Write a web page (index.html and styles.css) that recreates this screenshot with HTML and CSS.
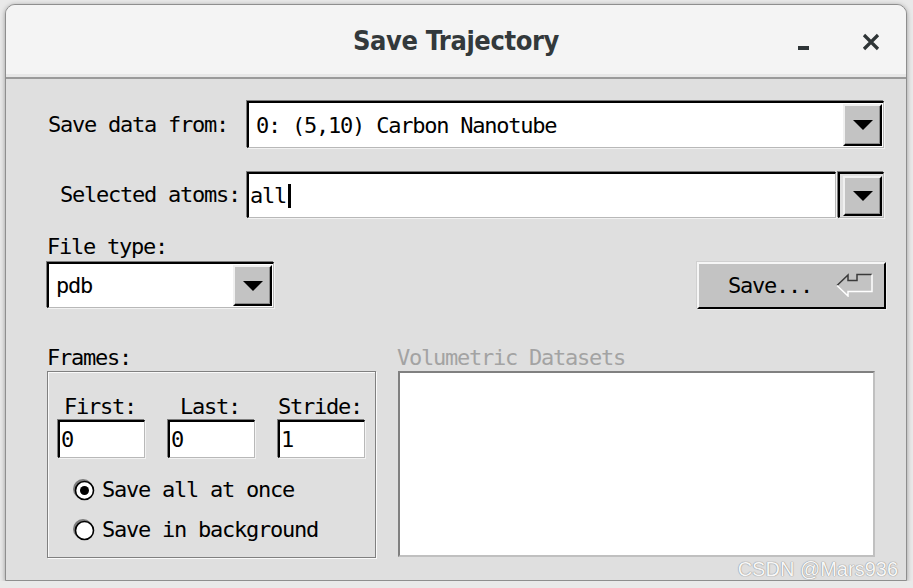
FILE: index.html
```html
<!DOCTYPE html>
<html>
<head>
<meta charset="utf-8">
<title>Save Trajectory</title>
<link rel="stylesheet" href="styles.css">
</head>
<body>
<div class="window">
  <div class="titlebar">
    <div class="title-spacer"></div>
    <div class="title">Save Trajectory</div>
    <div class="wm-buttons">
      <svg class="wm-icon" width="24" height="24" viewBox="0 0 24 24"><rect x="7" y="18" width="11" height="4" fill="#2e3436"/></svg>
      <svg class="wm-icon" width="24" height="24" viewBox="0 0 24 24"><path d="M5 7 L19 21 M19 7 L5 21" stroke="#2e3436" stroke-width="3.2" fill="none"/></svg>
    </div>
  </div>
  <div class="content">
    <div class="row row-source">
      <span class="label label-source">Save data from:</span>
      <div class="combo combo-source">
        <span class="combo-text">0: (5,10) Carbon Nanotube</span>
        <span class="arrow-btn"><svg width="20" height="10" viewBox="0 0 20 10"><path d="M0 0 L20 0 L10 10 Z" fill="#000"/></svg></span>
      </div>
    </div>
    <div class="row row-atoms">
      <span class="label label-atoms">Selected atoms:</span>
      <div class="entry entry-atoms"><span class="entry-text">all</span><span class="caret"></span></div>
      <div class="btn-frame">
        <span class="arrow-btn"><svg width="20" height="10" viewBox="0 0 20 10"><path d="M0 0 L20 0 L10 10 Z" fill="#000"/></svg></span>
      </div>
    </div>
    <div class="row row-type">
      <div class="type-group">
        <span class="label">File type:</span>
        <div class="combo combo-type">
          <span class="combo-text">pdb</span>
          <span class="arrow-btn"><svg width="20" height="10" viewBox="0 0 20 10"><path d="M0 0 L20 0 L10 10 Z" fill="#000"/></svg></span>
        </div>
      </div>
      <div class="save-btn">
        <span class="save-text">Save...</span>
        <svg class="enter-icon" width="38" height="24" viewBox="0 0 38 24">
          <polyline points="1,12.5 12,2 12,7.5 21,7.5 21,1.5 36,1.5" fill="none" stroke="#3a3a3a" stroke-width="1.5"/>
          <polyline points="36,1.5 36,18.5 12,18.5 12,23 1,12.5" fill="none" stroke="#ffffff" stroke-width="1.5"/>
        </svg>
      </div>
    </div>
    <div class="row row-bottom">
      <div class="frames-group">
        <span class="label">Frames:</span>
        <div class="groove">
          <div class="frame-fields">
            <div class="field">
              <span class="label">First:</span>
              <div class="entry entry-small"><span class="entry-text">0</span></div>
            </div>
            <div class="field">
              <span class="label">Last:</span>
              <div class="entry entry-small"><span class="entry-text">0</span></div>
            </div>
            <div class="field">
              <span class="label">Stride:</span>
              <div class="entry entry-small"><span class="entry-text">1</span></div>
            </div>
          </div>
          <div class="radios">
            <div class="radio">
              <svg width="24" height="24" viewBox="0 0 24 24">
                <circle cx="11" cy="11" r="10" fill="#7a7a7a"/>
                <circle cx="12.5" cy="12.5" r="9" fill="#fff" stroke="#000" stroke-width="1.6"/>
                <circle cx="12.5" cy="12.5" r="4.5" fill="#000"/>
              </svg>
              <span class="label">Save all at once</span>
            </div>
            <div class="radio">
              <svg width="24" height="24" viewBox="0 0 24 24">
                <circle cx="11" cy="11" r="10" fill="#7a7a7a"/>
                <circle cx="12.5" cy="12.5" r="9" fill="#fff" stroke="#000" stroke-width="1.6"/>
              </svg>
              <span class="label">Save in background</span>
            </div>
          </div>
        </div>
      </div>
      <div class="vol-group">
        <span class="label label-disabled">Volumetric Datasets</span>
        <div class="listbox"></div>
      </div>
    </div>
  </div>
  <div class="watermark">CSDN @Mars936</div>
</div>
</body>
</html>
```
FILE: styles.css
```css
* { box-sizing: border-box; }
html, body {
  margin: 0;
  background: #e9e9e9;
}
body {
  padding: 4px 0 0 5px;
}
.window {
  position: relative;
  width: 902px;
  height: 577px;
  border: 1px solid #8e8e8e;
  border-radius: 10px 10px 0 0;
  background: #dfdfdf;
  box-shadow: 0 1px 5px rgba(0,0,0,0.35);
  overflow: hidden;
}
.titlebar {
  height: 74px;
  background: #f4f4f4;
  border-bottom: 2px solid #9a9a9a;
  box-shadow: inset 0 -3px 0 #e7e7e7;
  display: grid;
  grid-template-columns: 1fr auto 1fr;
  align-items: center;
}
.title {
  font-family: "DejaVu Sans Condensed", "DejaVu Sans", sans-serif;
  font-size: 27px;
  font-weight: bold;
  color: #33393b;
  letter-spacing: -0.4px;
  padding-bottom: 2px;
}
.wm-buttons {
  display: flex;
  justify-content: flex-end;
  gap: 44px;
  padding-right: 23px;
  padding-bottom: 2px;
}
.wm-icon { display: block; }

.content {
  padding: 22px 22px 0 41px;
}
.label {
  font-family: "DejaVu Sans Mono", "Liberation Mono", monospace;
  font-size: 22px;
  line-height: 22px;
  letter-spacing: -1.24px;
  color: #000;
  white-space: pre;
}
.label-disabled { color: #a3a3a3; }

.row { display: flex; }
.row-source { align-items: center; height: 47px; }
.label-source { margin-left: 1px; }
.combo {
  display: flex;
  align-items: stretch;
  background: #fff;
  border-style: solid;
  border-width: 2px 1px 1px 2px;
  border-color: #000 #b8b8b8 #b8b8b8 #000;
  box-shadow: -1px -1px 0 #7c7c7c, 1px 1px 0 #f2f2f2;
  padding: 1px 1px 1px 0;
}
.combo-source {
  flex: 1;
  height: 47px;
  margin-left: 19px;
}
.combo-text {
  flex: 1;
  padding-left: 7px;
  display: flex;
  align-items: center;
  font-family: "DejaVu Sans Mono", "Liberation Mono", monospace;
  font-size: 22px;
  letter-spacing: -1.24px;
  white-space: pre;
}
.arrow-btn {
  width: 39px;
  background: #c3c3c3;
  border-style: solid;
  border-width: 2px;
  border-color: #f0f0f0 #000 #000 #f0f0f0;
  box-shadow: inset -1px -1px 0 #8c8c8c;
  display: flex;
  align-items: center;
  justify-content: center;
}
.arrow-btn svg { display: block; margin-left: 1px; }

.row-atoms { margin-top: 24px; height: 46px; align-items: center; }
.label-atoms { margin-left: 13px; }
.entry {
  background: #fff;
  border-style: solid;
  border-width: 2px 1px 1px 2px;
  border-color: #000 #b8b8b8 #b8b8b8 #000;
  box-shadow: -1px -1px 0 #7c7c7c, 1px 1px 0 #f2f2f2;
  display: flex;
  align-items: center;
}
.entry-text {
  font-family: "DejaVu Sans Mono", "Liberation Mono", monospace;
  font-size: 22px;
  letter-spacing: -1.24px;
  white-space: pre;
}
.entry-atoms {
  flex: 1;
  height: 46px;
  margin-left: 7px;
  padding-left: 1px;
}
.caret {
  width: 3px;
  height: 24px;
  background: #000;
  margin-left: 2px;
}
.btn-frame {
  width: 46px;
  height: 46px;
  margin-left: 2px;
  display: flex;
  border-style: solid;
  border-width: 2px 1px 1px 2px;
  border-color: #000 #b8b8b8 #b8b8b8 #000;
  box-shadow: -1px -1px 0 #7c7c7c, 1px 1px 0 #f2f2f2;
  padding: 2px 1px 1px 3px;
}
.btn-frame .arrow-btn { flex: 1; }

.row-type {
  margin-top: 18px;
  justify-content: space-between;
  align-items: flex-end;
}
.type-group {
  display: flex;
  flex-direction: column;
  gap: 4px;
}
.combo-type {
  width: 227px;
  height: 46px;
}
.combo-type .arrow-btn { width: 39px; }
.save-btn {
  width: 189px;
  height: 47px;
  margin-right: -2px;
  margin-bottom: -1px;
  background: #c3c3c3;
  border-style: solid;
  border-width: 2px;
  border-color: #f6f6f6 #000 #000 #f6f6f6;
  box-shadow: 1px 1px 0 #efefef, -1px -1px 0 #d0d0d0;
  display: flex;
  align-items: center;
  padding-left: 29px;
}
.save-text {
  font-family: "DejaVu Sans Mono", "Liberation Mono", monospace;
  font-size: 22px;
  letter-spacing: -1.24px;
  white-space: pre;
}
.enter-icon { display: block; margin-left: 24px; margin-top: -2px; }

.row-bottom {
  margin-top: 39px;
  align-items: flex-start;
}
.frames-group {
  width: 329px;
  display: flex;
  flex-direction: column;
  gap: 2px;
}
.groove {
  height: 187px;
  border: 1px solid #808080;
  box-shadow: inset 1px 1px 0 #fafafa, 1px 1px 0 #fafafa;
  padding: 24px 0 0 10px;
}
.frame-fields {
  display: flex;
  gap: 23px;
}
.field {
  display: flex;
  flex-direction: column;
  align-items: center;
  gap: 2px;
}
.field .label { margin-right: 3px; }
.entry-small {
  width: 87px;
  height: 38px;
  padding-left: 1px;
  align-self: stretch;
}
.radios {
  margin-top: 12px;
  display: flex;
  flex-direction: column;
}
.radio {
  height: 40px;
  display: flex;
  align-items: center;
  gap: 6px;
  padding-left: 14px;
}
.radio svg { display: block; }

.vol-group {
  margin-left: 21px;
  display: flex;
  flex-direction: column;
  gap: 2px;
}
.listbox {
  margin-left: 1px;
  width: 477px;
  height: 186px;
  background: #fff;
  border-style: solid;
  border-width: 2px;
  border-color: #808080 #c0c0c0 #c0c0c0 #808080;
}
.watermark {
  position: absolute;
  right: 8px;
  bottom: 0;
  font-family: "Liberation Sans", Arial, sans-serif;
  font-size: 20px;
  line-height: 22px;
  color: #f7f7f7;
  text-shadow: 0 0 1px #8a8a8a, 0 0 1px #8a8a8a;
}
```
